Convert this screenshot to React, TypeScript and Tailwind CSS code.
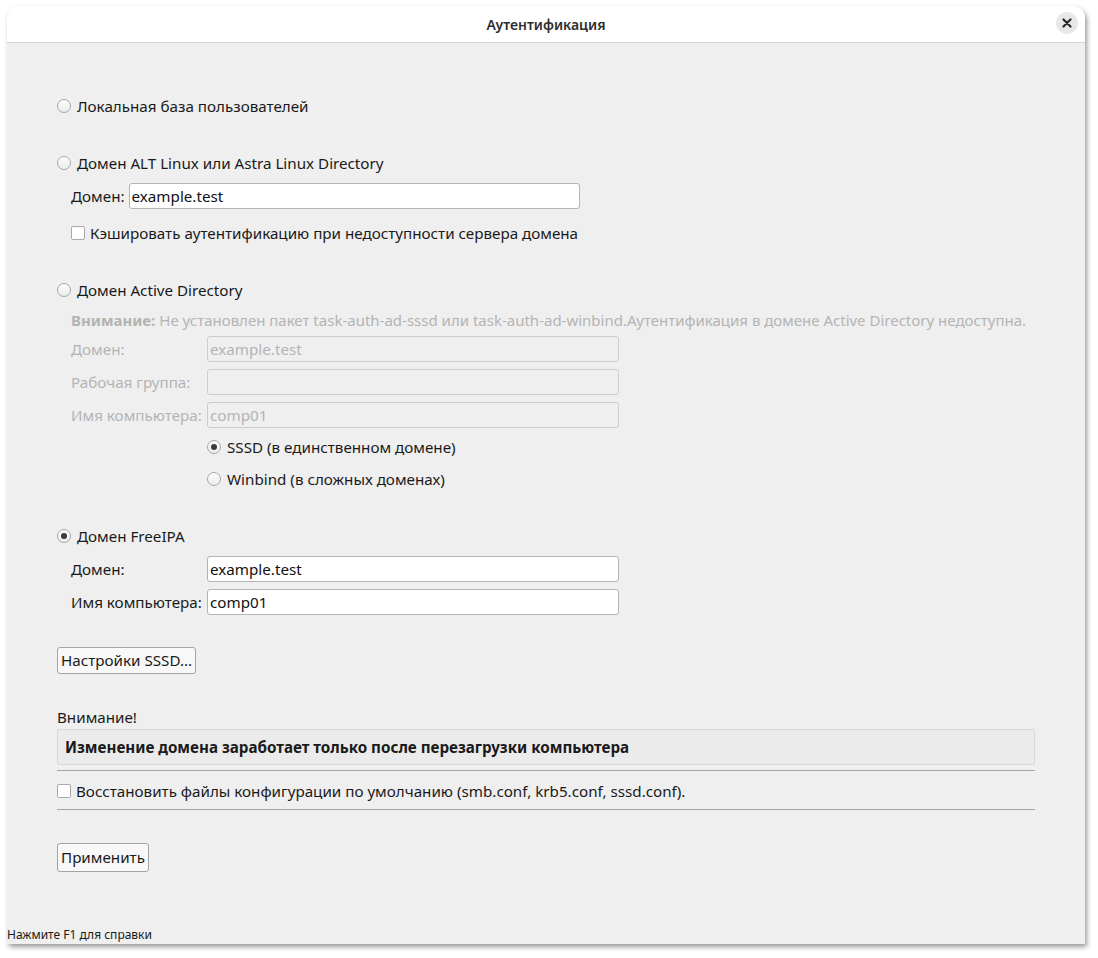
import React from "react";

const font = { fontFamily: '"Noto Sans", "Open Sans", sans-serif' };

const Radio = ({ checked = false }: { checked?: boolean }) => (
    <span className="flex h-[14px] w-[14px] shrink-0 items-center justify-center rounded-full border border-[#a8a8a8] bg-gradient-to-b from-[#fdfdfd] to-[#ececec]">
        {checked && <span className="h-[6px] w-[6px] rounded-full bg-[#3a3a3a]" />}
    </span>
);

const Check = () => (
    <span className="h-[14px] w-[14px] shrink-0 rounded-[2px] border border-[#a8a8a8] bg-white" />
);

const RadioRow = ({ label, checked, className = "" }: { label: string; checked?: boolean; className?: string }) => (
    <div className={`flex h-5 items-center gap-[6px] ${className}`}>
        <Radio checked={checked} />
        <span>{label}</span>
    </div>
);

const Field = ({ value, disabled, className = "" }: { value: string; disabled?: boolean; className?: string }) => (
    <div
        className={`flex h-[26px] items-center rounded-[3px] border px-[2px] ${disabled
            ? "border-[#cdcdcd] bg-[#efefef] text-[#b4b4b4]"
            : "border-[#b4b4b4] bg-white text-[#111]"
            } ${className}`}
    >
        {value}
    </div>
);

const FormRow = ({ label, value, disabled }: { label: string; value: string; disabled?: boolean }) => (
    <div className="flex items-center">
        <span className={`w-[136px] ${disabled ? "text-[#b4b4b4]" : ""}`}>{label}</span>
        <Field value={value} disabled={disabled} className="w-[412px]" />
    </div>
);

export default function App() {
    return (
        <div className="h-[958px] w-[1098px] bg-white pl-[7px] pt-[6px] text-[15.2px] text-[#1a1a1a]" style={font}>
            <div className="flex h-[938px] w-[1078px] flex-col overflow-hidden rounded-t-[12px] bg-[#efefef] shadow-[2px_3px_5px_rgba(0,0,0,0.4)]">
                {/* заголовок */}
                <div className="relative flex h-[37px] shrink-0 items-center justify-center border-b border-[#d6d6d6] bg-white">
                    <span className="text-[14px] font-semibold text-[#2e2e2e]">Аутентификация</span>
                    <button className="absolute right-[7px] top-[6px] flex h-[22px] w-[22px] items-center justify-center rounded-full bg-[#e8e8e8]">
                        <svg width="10" height="10" viewBox="0 0 10 10">
                            <path d="M1.5 1.5L8.5 8.5M8.5 1.5L1.5 8.5" stroke="#2a2a2a" strokeWidth="2.2" strokeLinecap="round" />
                        </svg>
                    </button>
                </div>

                <div className="flex flex-1 flex-col pl-[50px]">
                    <RadioRow className="mt-[53px]" label="Локальная база пользователей" />

                    <RadioRow className="mt-[37px]" label="Домен ALT Linux или Astra Linux Directory" />
                    <div className="ml-[14px] mt-[10px] flex items-center gap-[4px]">
                        <span>Домен:</span>
                        <Field value="example.test" className="w-[451px]" />
                    </div>
                    <div className="ml-[14px] mt-[14px] flex h-5 items-center gap-[5px]">
                        <Check />
                        <span>Кэшировать аутентификацию при недоступности сервера домена</span>
                    </div>

                    <RadioRow className="mt-[37px]" label="Домен Active Directory" />
                    <div className="ml-[14px] mt-[10px] flex h-5 items-center text-[15px] text-[#b4b4b4]">
                        <span className="font-bold">Внимание:</span>
                        <span className="ml-[4px]">Не установлен пакет task-auth-ad-sssd или task-auth-ad-winbind.Аутентификация в домене Active Directory недоступна.</span>
                    </div>
                    <div className="ml-[14px] mt-[6px] flex flex-col gap-[7px]">
                        <FormRow label="Домен:" value="example.test" disabled />
                        <FormRow label="Рабочая группа:" value="" disabled />
                        <FormRow label="Имя компьютера:" value="comp01" disabled />
                    </div>
                    <RadioRow className="ml-[150px] mt-[9px]" checked label="SSSD (в единственном домене)" />
                    <RadioRow className="ml-[150px] mt-[12px]" label="Winbind (в сложных доменах)" />

                    <RadioRow className="mt-[37px]" checked label="Домен FreeIPA" />
                    <div className="ml-[14px] mt-[10px] flex flex-col gap-[7px]">
                        <FormRow label="Домен:" value="example.test" />
                        <FormRow label="Имя компьютера:" value="comp01" />
                    </div>

                    <div className="mt-[32px]">
                        <button className="h-[27px] rounded-[3px] border border-[#a4a4a4] bg-[#f8f8f8] px-[3px]">Настройки SSSD...</button>
                    </div>

                    <div className="mt-[33px] flex h-5 items-center">Внимание!</div>
                    <div className="mt-[2px] flex h-[36px] w-[978px] items-center rounded-[2px] border border-[#d8d8d8] bg-[#ebebeb] px-[7px] font-bold">
                        Изменение домена заработает только после перезагрузки компьютера
                    </div>
                    <div className="mt-[5px] h-[2px] w-[978px] border-t border-[#a4a4a4]" />
                    <div className="mt-[9px] flex h-5 items-center gap-[5px]">
                        <Check />
                        <span>Восстановить файлы конфигурации по умолчанию (smb.conf, krb5.conf, sssd.conf).</span>
                    </div>
                    <div className="mt-[8px] h-[2px] w-[978px] border-t border-[#a4a4a4]" />

                    <div className="mt-[32px]">
                        <button className="h-[29px] rounded-[3px] border border-[#a4a4a4] bg-[#f8f8f8] px-[3px]">Применить</button>
                    </div>
                </div>

                <div className="flex h-[18px] shrink-0 items-start text-[12px] text-[#1a1a1a]">Нажмите F1 для справки</div>
            </div>
        </div>
    );
}
